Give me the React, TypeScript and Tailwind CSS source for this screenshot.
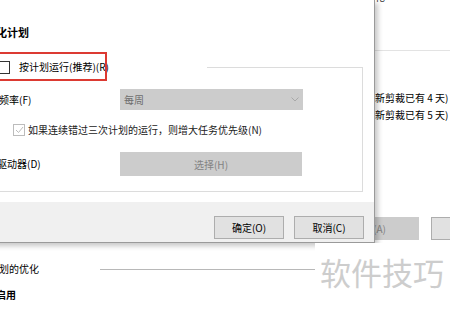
import React from 'react';

const font = "font-['Noto_Sans_CJK_SC','Noto_Sans',sans-serif]";

const Dialog: React.FC = () => {
    return (
        <div className="absolute left-[-20px] top-0 flex h-[243px] w-[395px] flex-col border-r border-b border-[#9a9a9a] bg-white shadow-[3px_3px_5px_rgba(0,0,0,0.22)]">
            {/* body */}
            <div className="flex h-[203px] flex-col">
                <div className="ml-[5px] mt-[24px] text-[11px] font-bold leading-[16px] text-black">优化计划</div>

                {/* group box, header sits on the top border */}
                <div className="ml-[8px] mt-[27px] flex w-[375px] flex-col border-r border-b border-l border-[#dcdcdc] pb-[15px]">
                    <div className="-mt-[7px] flex h-[14px] items-center">
                        <span className="ml-[8px] h-[13px] w-[13px] shrink-0 border border-[#333] bg-white" />
                        <span className="ml-[9px] text-[10px] leading-[14px] text-black">按计划运行(推荐)(R)</span>
                        <span className="ml-auto h-px w-[155px] bg-[#dcdcdc]" />
                    </div>

                    <div className="mt-[15px] flex h-[21px] items-center pl-[10px]">
                        <span className="w-[121px] shrink-0 text-[10px] leading-[14px] text-black">频率(F)</span>
                        <div className="flex h-[21px] w-[183px] items-center justify-between bg-[#cccccc] pl-[4px] pr-[4px]">
                            <span className="text-[10px] text-[#6d6d6d]">每周</span>
                            <svg width="8" height="5" viewBox="0 0 8 5" fill="none">
                                <path d="M0.5 0.5 L4 4 L7.5 0.5" stroke="#a8a8a8" strokeWidth="1" />
                            </svg>
                        </div>
                    </div>

                    <div className="mt-[13px] flex h-[14px] items-center pl-[24px]">
                        <span className="flex h-[12px] w-[12px] shrink-0 items-center justify-center border border-[#bcbcbc] bg-white">
                            <svg width="9" height="8" viewBox="0 0 9 8" fill="none">
                                <path d="M1 4 L3.5 6.5 L8 1" stroke="#bcbcbc" strokeWidth="1" />
                            </svg>
                        </span>
                        <span className="ml-[3px] whitespace-nowrap text-[10px] leading-[14px] text-[#222]">如果连续错过三次计划的运行，则增大任务优先级(N)</span>
                    </div>

                    <div className="mt-[15px] flex h-[24px] items-center pl-[8px]">
                        <span className="w-[123px] shrink-0 text-[10px] leading-[14px] text-black">驱动器(D)</span>
                        <div className="flex h-[24px] w-[182px] items-center justify-center bg-[#cccccc] text-[10px] text-[#838383]">选择(H)</div>
                    </div>
                </div>
            </div>

            {/* footer */}
            <div className="flex h-[40px] justify-end gap-[10px] bg-[#f0f0f0] pr-[10px] pt-[14px]">
                <button className="flex h-[23px] w-[70px] items-center justify-center border border-[#adadad] bg-[#e1e1e1] text-[10px] text-black">确定(O)</button>
                <button className="flex h-[23px] w-[70px] items-center justify-center border border-[#adadad] bg-[#e1e1e1] text-[10px] text-black">取消(C)</button>
            </div>

            {/* red highlight annotation */}
            <div className="pointer-events-none absolute left-0 top-[52px] h-[29px] w-[127px] border-2 border-[#dc3a32]" />
        </div>
    );
};

export default function App() {
    return (
        <div className={`relative h-[309px] w-[450px] overflow-hidden bg-white ${font}`}>
            {/* window behind the dialog */}
            <div className="flex h-full flex-col">
                <div className="flex h-[245px]">
                    <div className="w-[373px] shrink-0" />
                    <div className="flex flex-1 flex-col">
                        <div className="h-[5px] overflow-hidden">
                            <div className="-mt-[9px] pl-[2px] text-[10px] leading-[12px] text-[#333]">化</div>
                        </div>
                        <div className="mt-[45px] h-px bg-[#e3e3e3]" />
                        <div className="mt-[38px] whitespace-nowrap pl-[2px] text-[10px] leading-[17px] text-black">新剪裁已有 4 天)</div>
                        <div className="whitespace-nowrap pl-[2px] text-[10px] leading-[17px] text-black">新剪裁已有 5 天)</div>
                        <div className="-ml-[33px] mt-[94px] flex gap-[12px]">
                            <div className="flex h-[23px] w-[79px] shrink-0 items-center bg-[#cccccc] pl-[13px] text-[10px] text-[#838383]">优化(A)</div>
                            <div className="h-[23px] w-[40px] shrink-0 border border-[#adadad] bg-[#e1e1e1]" />
                        </div>
                    </div>
                </div>
                <div className="mt-[17px] flex h-[14px] items-center">
                    <span className="-ml-[1px] w-[101px] shrink-0 text-[10px] leading-[14px] text-black">划的优化</span>
                    <span className="h-px w-[230px] bg-[#b8b8b8]" />
                </div>
                <div className="-ml-[4px] mt-[12px] text-[10px] font-bold leading-[14px] text-black">启用</div>
            </div>

            <Dialog />

            {/* watermark */}
            <div className="absolute left-[315px] top-[243px] h-[66px] w-[135px] bg-white pl-[5px] pt-[13px] text-[31px] leading-[31px] text-[#cdcdcd]">软件技巧</div>
        </div>
    );
}
